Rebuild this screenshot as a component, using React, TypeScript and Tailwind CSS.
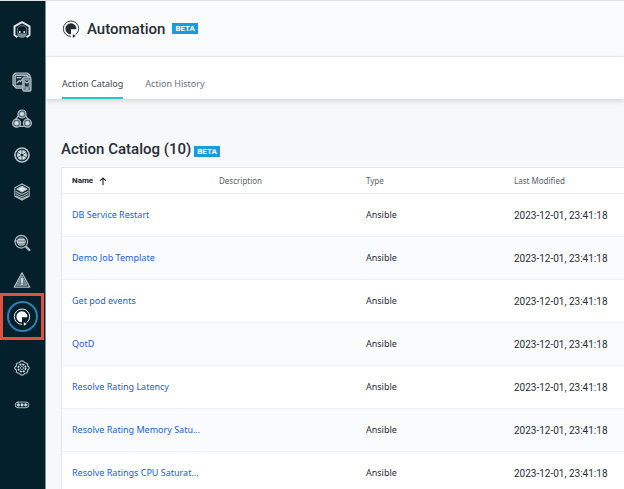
import type { ReactNode } from "react";

type NavItem = { label: string; icon: ReactNode; active?: boolean };

const tint = "#b3c0c6";

function Icon({ children, size = 20 }: { children: ReactNode; size?: number }) {
  return (
    <svg width={size} height={size} viewBox="0 0 20 20" fill="none" stroke={tint} strokeWidth="1.2" strokeLinejoin="round" strokeLinecap="round" aria-hidden="true">
      {children}
    </svg>
  );
}

function AutomationGlyph({ color, size }: { color: string; size: number }) {
  return (
    <svg width={size} height={size} viewBox="0 0 18 18" fill="none" aria-hidden="true">
      <path d="M9 16.4A7.7 7.7 0 1 1 16.7 8.7 7.6 7.6 0 0 1 13.8 14.6" stroke={color} strokeWidth="0.9" />
      <path d="M8.8 3.2a5.5 5.5 0 1 0 .2 11V9.2h5.4A5.5 5.5 0 0 0 8.8 3.2Z" fill={color} />
      <path d="m10.8 14.2 3 1.8-3 1.8z" fill={color} />
    </svg>
  );
}

function Logo() {
  return (
    <svg width="18" height="18" viewBox="0 0 18 18" fill="none" aria-hidden="true">
      <path d="M4.4 16.2 1.5 14V5.4L9 1.2l7.5 4.2V14l-2.9 2.2" stroke="#dfe6e8" strokeWidth="2" strokeLinejoin="round" />
      <path d="M4.4 7 7 4.8h4L13.6 7v5L12 13.4H6L4.4 12z" fill="#0a1a22" stroke="#84939a" strokeWidth="0.8" />
      <path d="M4 12.4h10l-1 3.2-2.4 1.2H7.4L5 15.6z" fill="#7d8d94" />
      <circle cx="6.8" cy="11" r="0.9" fill="#fff" />
      <circle cx="11.2" cy="11" r="0.9" fill="#fff" />
    </svg>
  );
}

const groups: { height: string; items: NavItem[] }[] = [
  {
    height: "h-[146px]",
    items: [
      {
        label: "Websites and mobile apps",
        icon: (
          <Icon>
            <path d="M10.5 16.2H4.4L1 13V3.6L3.4 1h11.8L18 3.4v2" fill="#5c717b" />
            <rect x="3.2" y="3.4" width="12.6" height="10.4" rx="1" fill="#12303b" />
            <path d="m5 10.8 2-2.2 1.4 1 2-2.4M5 5.6h4" />
            <rect x="10.8" y="5.2" width="8.2" height="14" rx="2" fill="#6c8089" />
            <rect x="12.6" y="8" width="4.6" height="7" fill="#12303b" strokeWidth="0.8" />
            <path d="m13 9.6 2 1.6 2-2M14.2 17.2h1.4" />
          </Icon>
        ),
      },
      {
        label: "Applications",
        icon: (
          <Icon>
            <path d="M6.4 6.6 3.6 10.6M13.6 6.6l2.8 4M7.4 17.4h5.2" />
            <circle cx="10" cy="5" r="4" fill="#4d636d" />
            <circle cx="4.6" cy="14.2" r="4" fill="#4d636d" />
            <circle cx="15.4" cy="14.2" r="4" fill="#4d636d" />
            <g fill="#d5dee2" strokeWidth="0.5">
              <circle cx="10" cy="5" r="2.1" />
              <circle cx="4.6" cy="14.2" r="2.1" />
              <circle cx="15.4" cy="14.2" r="2.1" />
            </g>
          </Icon>
        ),
      },
      {
        label: "Kubernetes",
        icon: (
          <Icon size={18}>
            <circle cx="10" cy="10" r="7.8" strokeWidth="1.8" />
            <circle cx="10" cy="10" r="5.4" fill="#d5dee2" strokeWidth="0.8" />
            <path d="M10 4.6v3M10 12.4v3M5.3 7.3l2.6 1.5M12.1 11.2l2.6 1.5M5.3 12.7l2.6-1.5M12.1 8.8l2.6-1.5" stroke="#12303b" strokeWidth="0.8" />
            <circle cx="10" cy="10" r="1.7" fill="#12303b" stroke="none" />
          </Icon>
        ),
      },
      {
        label: "Infrastructure",
        icon: (
          <Icon size={18}>
            <path d="m10 1 8 4.3v9.4L10 19l-8-4.3V5.3z" />
            <path d="m10 3.6 5.8 3.2L10 10 4.2 6.8z" fill="#e3e9eb" />
            <path d="m3.4 9.4 6.6 3.4 6.6-3.4M3.4 12l6.6 3.4 6.6-3.4M3.4 14.4l6.6 3 6.6-3" />
          </Icon>
        ),
      },
    ],
  },
  {
    height: "h-[110px]",
    items: [
      {
        label: "Analytics",
        icon: (
          <Icon size={18}>
            <circle cx="9.2" cy="8.6" r="7" strokeWidth="1.3" />
            <circle cx="9.2" cy="8.6" r="4.6" fill="#4d636d" strokeWidth="0.8" />
            <path d="M6 6h6.4M2.4 7.7h10M4.8 9.5h7.8M6 11.2h6.4" stroke="#e3e9eb" strokeWidth="1" />
            <path d="m14.8 14.4 3.4 3.4" strokeWidth="2.6" />
          </Icon>
        ),
      },
      {
        label: "Events",
        icon: (
          <Icon size={18}>
            <path d="M10 2 18.6 18H1.4z" strokeWidth="1.4" />
            <path d="m10 5.4 5.6 10.5H4.4z" fill="#66808a" strokeWidth="0.8" />
            <path d="M10 8.6v3.8M10 14.5v.1" stroke="#fff" strokeWidth="1.6" />
          </Icon>
        ),
      },
      { label: "Automation", icon: <AutomationGlyph color="#ffffff" size={18} />, active: true },
    ],
  },
  {
    height: "h-[73px]",
    items: [
      {
        label: "Settings",
        icon: (
          <Icon size={18}>
            <path d="m8 2.8 2-.8 2 .8 1 1.4 2 .2 1.2 1.4.1 2 1.4 1.2.3 1-.3 1-1.4 1.2-.1 2L15 15.6l-2 .2-1 1.4-2 .8-2-.8-1-1.4-2-.2-1.2-1.4-.1-2L2.3 11 2 10l.3-1 1.4-1.2.1-2L5 4.4l2-.2z" strokeWidth="1.3" />
            <circle cx="10" cy="10" r="4.1" stroke="#dce4e7" strokeWidth="1.8" strokeDasharray="2.2 1" strokeLinecap="butt" />
            <circle cx="10" cy="10" r="1.8" fill="#12303b" strokeWidth="0.8" />
          </Icon>
        ),
      },
      {
        label: "More",
        icon: (
          <Icon size={16}>
            <rect x="1.5" y="6.4" width="17" height="7" rx="3.5" />
            <g fill="#dce4e7" strokeWidth="0.5">
              <circle cx="5.4" cy="9.9" r="1.7" />
              <circle cx="10" cy="9.9" r="1.7" />
              <circle cx="14.6" cy="9.9" r="1.7" />
            </g>
          </Icon>
        ),
      },
    ],
  },
];

const actions = [
  "DB Service Restart",
  "Demo Job Template",
  "Get pod events",
  "QotD",
  "Resolve Rating Latency",
  "Resolve Rating Memory Satu...",
  "Resolve Ratings CPU Saturat...",
];

function Beta() {
  return (
    <span className="bg-[#1a9be0] px-[3px] font-[Roboto,sans-serif] text-[8px] font-bold leading-[11px] text-white">BETA</span>
  );
}

function Sidebar() {
  return (
    <nav aria-label="Main" className="flex w-[46px] shrink-0 flex-col gap-[15px] border-r border-[#7d8f9b] bg-[#03202b]">
      <a href="#home" aria-label="Home" className="flex h-12 items-end justify-center pb-[10px] pr-px">
        <Logo />
      </a>
      {groups.map((group) => (
        <div key={group.height} className={`flex shrink-0 flex-col ${group.height}`}>
          {group.items.map((item) => (
            <a key={item.label} href="#nav" aria-label={item.label} className="relative flex flex-1 items-center justify-center pr-px">
              {item.active ? (
                <>
                  <span className="absolute -inset-y-[5px] left-0 right-px border-[3px] border-[#e4503f]" />
                  <span className="flex size-[31px] shrink-0 items-center justify-center rounded-full border-2 border-[#2b80b4]">{item.icon}</span>
                </>
              ) : (
                item.icon
              )}
            </a>
          ))}
        </div>
      ))}
    </nav>
  );
}

export default function App() {
  return (
    <div className="flex h-screen overflow-hidden border-t border-[#dfe1e4] bg-[#f7f8fa] font-['Noto_Sans',sans-serif] text-[#272d35]">
      <Sidebar />
      <main className="min-w-0 flex-1">
        <header className="flex h-14 items-center gap-[7px] border-b border-[#eceef1] bg-[#fafbfd] pl-4">
          <AutomationGlyph color="#252c36" size={18} />
          <h1 className="font-[Roboto,sans-serif] text-[15px] font-medium leading-5">Automation</h1>
          <Beta />
        </header>
        <div role="tablist" className="flex h-[42px] items-end gap-[22px] bg-white pl-4 text-[9px] shadow-[0_2px_5px_rgba(40,45,50,0.18)]">
          <button role="tab" aria-selected="true" className="h-7 border-b-2 border-[#2bc5c8] text-[#414852]">Action Catalog</button>
          <button role="tab" aria-selected="false" className="h-7 border-b-2 border-transparent text-[#6a727c]">Action History</button>
        </div>
        <section className="pl-[15px] pt-10">
          <div className="flex h-7 items-start gap-[3px]">
            <h2 className="font-[Roboto,sans-serif] text-[15px] font-medium leading-5">Action Catalog (10)</h2>
            <span className="flex h-6 items-center"><Beta /></span>
          </div>
          <table className="w-full table-fixed border-separate border-spacing-0 border-l border-t border-[#e4e6e9] bg-white text-left text-[9px]">
            <thead>
              <tr className="h-[26px] text-[8px] text-[#59616b] [&>th]:border-b [&>th]:border-[#e8eaed] [&>th]:p-0 [&>th]:pl-[10px] [&>th]:font-normal">
                <th scope="col" aria-sort="ascending" className="w-[147px]">
                  <button className="flex items-center gap-[6px] font-[Roboto,sans-serif] font-bold text-[#20262e]">
                    Name
                    <svg width="8" height="8" viewBox="0 0 8 8" fill="none" stroke="currentColor" strokeWidth="1.1" aria-hidden="true">
                      <path d="M4 8V1M1 3.8 4 .9l3 2.9" />
                    </svg>
                  </button>
                </th>
                <th scope="col" className="w-[147px]">Description</th>
                <th scope="col" className="w-[148px]">Type</th>
                <th scope="col">Last Modified</th>
              </tr>
            </thead>
            <tbody>
              {actions.map((name) => (
                <tr key={name} className="h-[43px] even:bg-[#fafbfd] [&>td]:border-b [&>td]:border-[#eff0f2] [&>td]:p-0 [&>td]:pl-[10px]">
                  <td>
                    <a href="#action" className="whitespace-nowrap text-[#1b62d6]">{name}</a>
                  </td>
                  <td />
                  <td>Ansible</td>
                  <td className="whitespace-nowrap font-[Roboto,sans-serif] text-[10px]">2023-12-01, 23:41:18</td>
                </tr>
              ))}
            </tbody>
          </table>
        </section>
      </main>
    </div>
  );
}
